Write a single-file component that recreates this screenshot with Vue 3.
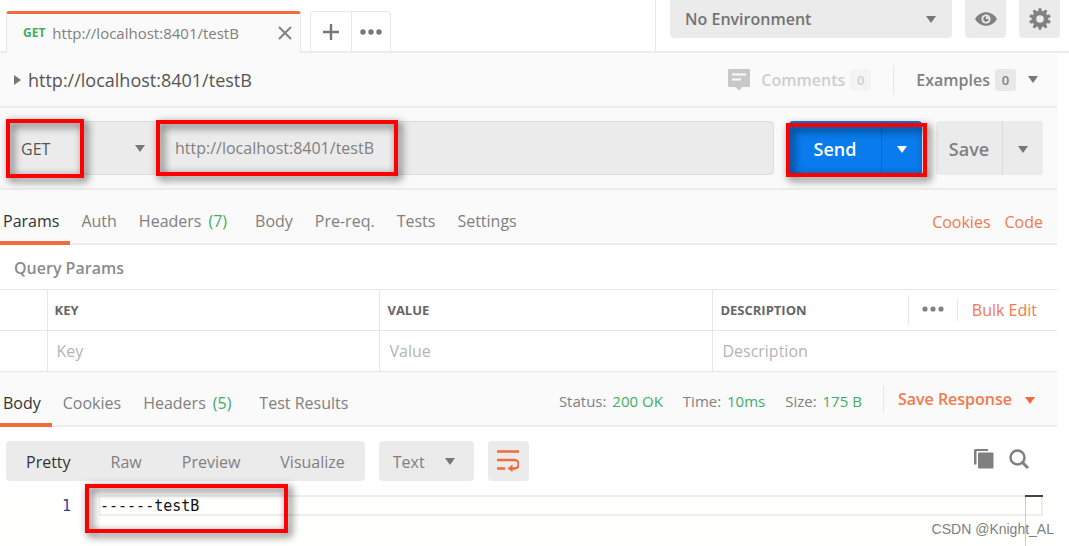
<script setup>
import { ref } from 'vue'

const url = ref('http://localhost:8401/testB')
const environment = ref('No Environment')
const method = ref('GET')
const format = ref('Text')
const requestTabs = [
  { name: 'Params', active: true },
  { name: 'Auth' },
  { name: 'Headers', count: 7 },
  { name: 'Body' },
  { name: 'Pre-req.' },
  { name: 'Tests' },
  { name: 'Settings' },
]
const responseTabs = [
  { name: 'Body', active: true },
  { name: 'Cookies' },
  { name: 'Headers', count: 5 },
  { name: 'Test Results' },
]
const stats = [
  { label: 'Status:', value: '200 OK' },
  { label: 'Time:', value: '10ms' },
  { label: 'Size:', value: '175 B' },
]
const views = ['Pretty', 'Raw', 'Preview', 'Visualize']
</script>

<template>
  <div class="app">
    <header class="topbar">
      <div class="file-tab">
        <span class="verb">GET</span>
        <span class="file-name">{{ url }}</span>
        <button class="plain close" aria-label="Close tab">
          <svg width="14" height="14" viewBox="0 0 14 14"><path d="M1 1l12 12M13 1L1 13" stroke="#808080" stroke-width="2" fill="none" /></svg>
        </button>
      </div>
      <div class="tab-tools">
        <button class="plain" aria-label="New tab">
          <svg width="16" height="16" viewBox="0 0 16 16"><path d="M8 0v16M0 8h16" stroke="#777" stroke-width="2.400" /></svg>
        </button>
        <button class="plain" aria-label="Tab options">
          <svg width="22" height="6" viewBox="0 0 22 6" fill="#777"><circle cx="3" cy="3" r="2.700" /><circle cx="11" cy="3" r="2.700" /><circle cx="19" cy="3" r="2.700" /></svg>
        </button>
      </div>
      <div class="env">
        <div class="picker env-picker">
          <select v-model="environment" aria-label="Environment"><option>No Environment</option></select>
          <span class="caret"></span>
        </div>
        <button class="square" aria-label="Environment quick look">
          <svg width="22" height="14" viewBox="0 0 22 14"><path d="M0 7C5-2 17-2 22 7C17 16 5 16 0 7Z" fill="#808080" /><circle cx="11" cy="7" r="4.600" fill="#ebebeb" /><circle cx="11" cy="7" r="2.700" fill="#808080" /><path d="M11 7V4.300A2.700 2.700 0 0 1 13.700 7Z" fill="#ebebeb" /></svg>
        </button>
        <button class="square" aria-label="Manage environments">
          <svg width="22" height="22" viewBox="-11 -11 22 22">
            <circle r="6" fill="none" stroke="#808080" stroke-width="4.500" />
            <path v-for="n in 10" :key="n" d="M-2-7L-1.300-10.800H1.300L2-7Z" fill="#808080" :transform="`rotate(${n * 36})`" />
          </svg>
        </button>
      </div>
    </header>

    <main class="content">
      <section class="title-row">
        <span class="disclosure"></span>
        <h1>{{ url }}</h1>
        <button class="plain comments" disabled>
          <svg width="22" height="22" viewBox="0 0 22 22"><path d="M1 0H21Q22 0 22 1V17Q22 18 21 18H14.500L11 21.500L7.500 18H1Q0 18 0 17V1Q0 0 1 0Z" fill="#c8c8c8" /><path d="M4 5.500H18M4 10.500H13" stroke="#fafafa" stroke-width="2.200" /></svg>
          Comments <span class="badge">0</span>
        </button>
        <button class="plain examples">Examples <span class="badge">0</span><span class="caret"></span></button>
      </section>

      <section class="url-row">
        <div class="address">
          <div class="picker method">
            <select v-model="method" aria-label="Request method"><option>GET</option></select>
            <span class="caret"></span>
            <span class="mark mark-method"></span>
          </div>
          <div class="url-field">
            <input v-model="url" type="text" aria-label="Request URL" spellcheck="false" />
            <span class="mark mark-url"></span>
          </div>
        </div>
        <div class="split send">
          <button>Send</button>
          <button aria-label="Send options"><span class="caret"></span></button>
          <span class="mark mark-send"></span>
        </div>
        <div class="split save">
          <button>Save</button>
          <button aria-label="Save options"><span class="caret"></span></button>
        </div>
      </section>

      <section class="tab-row">
        <nav class="tabs">
          <button v-for="tab in requestTabs" :key="tab.name" class="tab" :class="{ active: tab.active }">{{ tab.name }}<span v-if="tab.count" class="count">({{ tab.count }})</span></button>
        </nav>
        <div class="links"><a href="#">Cookies</a><a href="#">Code</a></div>
      </section>

      <h2>Query Params</h2>
      <table>
        <colgroup><col class="check-col" /><col class="field-col" /><col class="field-col" /><col /></colgroup>
        <thead>
          <tr>
            <th></th>
            <th>KEY</th>
            <th>VALUE</th>
            <th>
              <div class="description-head">
                <span>DESCRIPTION</span>
                <button class="plain more" aria-label="More columns">
                  <svg width="22" height="6" viewBox="0 0 22 6" fill="#808080"><circle cx="3" cy="3" r="2.600" /><circle cx="11" cy="3" r="2.600" /><circle cx="19" cy="3" r="2.600" /></svg>
                </button>
                <a href="#" class="bulk">Bulk Edit</a>
              </div>
            </th>
          </tr>
        </thead>
        <tbody>
          <tr>
            <td></td>
            <td><input type="text" placeholder="Key" aria-label="Key" /></td>
            <td><input type="text" placeholder="Value" aria-label="Value" /></td>
            <td><input type="text" placeholder="Description" aria-label="Description" /></td>
          </tr>
        </tbody>
      </table>

      <section class="tab-row response-row">
        <nav class="tabs">
          <button v-for="tab in responseTabs" :key="tab.name" class="tab" :class="{ active: tab.active }">{{ tab.name }}<span v-if="tab.count" class="count">({{ tab.count }})</span></button>
        </nav>
        <div class="stats">
          <span v-for="s in stats" :key="s.label">{{ s.label }} <b>{{ s.value }}</b></span>
        </div>
        <button class="plain save-response">Save Response <span class="caret"></span></button>
      </section>

      <section class="viewer-tools">
        <div class="views">
          <button v-for="(view, i) in views" :key="view" :class="{ active: i === 0 }">{{ view }}</button>
        </div>
        <div class="picker format">
          <select v-model="format" aria-label="Response format"><option>Text</option></select>
          <span class="caret"></span>
        </div>
        <button class="square" aria-label="Wrap lines">
          <svg width="22" height="22" viewBox="0 0 22 22" fill="none" stroke="#f26b3a" stroke-width="2.400"><path d="M0 1.500H22M0 10H17.500A4.250 4.250 0 0 1 17.500 18.500H13M0 18.500H8" /><path d="M15.500 14.500L10.500 18.500L15.500 22Z" fill="#f26b3a" stroke="none" /></svg>
        </button>
        <div class="viewer-actions">
          <button class="plain" aria-label="Copy response">
            <svg width="20" height="20" viewBox="0 0 20 20" fill="#808080"><path d="M0 1.500Q0 0 1.500 0H14V2H2.500V15.500H0Z" /><rect x="4" y="3.500" width="15.500" height="16" rx="1" /></svg>
          </button>
          <button class="plain" aria-label="Search response">
            <svg width="20" height="20" viewBox="0 0 20 20" fill="none" stroke="#808080"><circle cx="8.500" cy="8.500" r="7" stroke-width="2.500" /><path d="M13.500 13.500L19 19" stroke-width="3" /></svg>
          </button>
        </div>
      </section>

      <section class="editor">
        <span class="line-number">1</span>
        <div class="code-area">
          <code>------testB</code>
          <div class="overview"></div>
          <span class="mark mark-body"></span>
        </div>
      </section>
    </main>
    <span class="watermark">CSDN @Knight_AL</span>
  </div>
</template>

<style>
body {
  background: #fff;
}
</style>

<style scoped>
.app {
  position: relative;
  display: flex;
  flex-direction: column;
  min-height: 100vh;
  overflow: hidden;
  font-family: "Open Sans", "Noto Sans", sans-serif;
  font-size: 16px;
  line-height: 22px;
  color: #808080;
}
*, *::before, *::after {
  box-sizing: border-box;
}
button, input, select {
  font: inherit;
  color: inherit;
  margin: 0;
  padding: 0;
  border: 0;
  background: none;
  border-radius: 0;
}
button {
  display: flex;
  align-items: center;
  justify-content: center;
}
svg {
  display: block;
  flex: none;
}
a {
  color: #f2794f;
  text-decoration: none;
}
.caret {
  flex: none;
  border: 5px solid transparent;
  border-top: 7px solid #777;
  border-bottom: 0;
}
.picker {
  position: relative;
  display: flex;
  align-items: center;
  background: #ebebeb;
}
.picker select {
  appearance: none;
  width: 100%;
  height: 100%;
}
.picker .caret {
  position: absolute;
  right: 16px;
  pointer-events: none;
}
.square {
  width: 41px;
  height: 40px;
  border-radius: 4px;
  background: #ebebeb;
}
.topbar {
  display: flex;
  align-items: flex-end;
  height: 53px;
  padding-left: 6px;
  border-bottom: 2px solid #ececec;
}
.file-tab {
  display: flex;
  align-items: center;
  width: 295px;
  height: 42px;
  margin-bottom: -2px;
  padding: 0 8px 2px 16px;
  border: 1px solid #e6e6e6;
  border-top: 3px solid #f26b3a;
  border-bottom: 0;
  border-radius: 3px 3px 0 0;
  background: #fafafa;
  font-size: 15px;
}
.verb {
  margin-right: 7px;
  font-size: 12px;
  font-weight: 700;
  color: #3fae62;
}
.close {
  margin-left: auto;
}
.tab-tools {
  display: flex;
  height: 40px;
  margin-left: 9px;
  border: 1px solid #e6e6e6;
  border-bottom: 0;
  border-radius: 4px 4px 0 0;
}
.tab-tools button {
  width: 40px;
}
.tab-tools button + button {
  width: 39px;
  border-left: 1px solid #e6e6e6;
}
.env {
  display: flex;
  gap: 13px;
  height: 51px;
  margin-left: auto;
  padding: 0 9px 0 14px;
  border-left: 1px solid #e6e6e6;
}
.env .square, .env-picker {
  height: 38px;
  border-radius: 0 0 4px 4px;
}
.env-picker {
  width: 282px;
  font-weight: 600;
  color: #737373;
}
.env-picker select {
  padding-left: 15px;
}
.content {
  display: flex;
  flex: 1;
  flex-direction: column;
  margin-right: 12px;
}
.title-row {
  display: flex;
  align-items: center;
  height: 55px;
  padding: 0 19px 0 14px;
  border-bottom: 2px solid #ececec;
  background: #fafafa;
}
.disclosure {
  border: 5px solid transparent;
  border-left: 7px solid #777;
  border-right: 0;
}
h1 {
  flex: 1;
  margin: 0 0 0 7px;
  font-size: 18px;
  font-weight: 400;
  color: #555;
}
.badge {
  margin-left: 5px;
  width: 21px;
  border-radius: 3px;
  background: #e8e8e8;
  font-size: 13px;
}
.comments {
  height: 28px;
  gap: 0;
  padding-right: 22px;
  border-right: 1px solid #e6e6e6;
  font-weight: 600;
  color: #cecece;
}
.comments svg {
  margin-right: 11px;
}
.comments .badge {
  background: #f4f4f4;
}
.examples {
  padding-left: 22px;
  font-weight: 600;
}
.examples .caret {
  margin-left: 12px;
}
.url-row {
  display: flex;
  height: 82px;
  padding: 13px 14px 13px 6px;
  border-bottom: 2px solid #ececec;
  background: #fafafa;
}
.address {
  display: flex;
  flex: 1;
  height: 54px;
  border: 1px solid #dcdcdc;
  border-radius: 4px;
  background: #ebebeb;
}
.method {
  width: 149px;
  font-size: 16px;
  font-weight: 400;
  color: #555;
}
.method select {
  padding: 2px 0 0 14px;
}
.method .caret {
  right: 11px;
}
.url-field {
  position: relative;
  flex: 1;
}
.url-field input {
  width: 100%;
  height: 100%;
  padding: 0 20px 0 19px;
}
.split {
  position: relative;
  display: flex;
  height: 54px;
  border-radius: 4px;
  font-size: 18px;
  font-weight: 600;
}
.send {
  width: 133px;
  margin-left: 15px;
  background: #097bed;
  color: #fff;
}
.save {
  width: 107px;
  margin-left: 14px;
  background: #ebebeb;
}
.split button {
  padding-top: 2px;
}
.split button:first-child {
  flex: 1;
}
.split button:nth-child(2) {
  width: 41px;
  border-left: 1px solid #dadada;
}
.send button:nth-child(2) {
  border-left-color: #0869ca;
}
.send .caret {
  border-top-color: #fff;
}
.mark {
  position: absolute;
  z-index: 2;
  border: 4px solid #f00;
  filter: drop-shadow(3px 3px 4px rgba(0, 0, 0, 0.7));
  pointer-events: none;
}
.mark-method {
  inset: -3px auto -4px -1px;
  width: 78px;
}
.mark-url {
  top: -2px;
  bottom: -2px;
  left: 0;
  width: 242px;
}
.mark-send {
  inset: 2px -5px -2px -3px;
}
.mark-body {
  top: -11px;
  left: -14px;
  width: 203px;
  height: 49px;
}
.tab-row {
  display: flex;
  align-items: stretch;
  height: 55px;
  border-bottom: 2px solid #ececec;
  background: #fafafa;
}
.tabs {
  display: flex;
  margin-bottom: -2px;
}
.tab {
  padding: 10px 11px 0;
  border-bottom: 4px solid transparent;
}
.tab.active {
  padding: 10px 11px 0 3px;
  border-bottom-color: #f26b3a;
  color: #333;
}
.count {
  margin: 0 6px 0 7px;
  color: #3fae62;
}
.links {
  display: flex;
  align-items: center;
  gap: 14px;
  margin-left: auto;
  padding: 10px 14px 0 0;
}
h2 {
  margin: 0;
  padding: 12px 14px 10px;
  font-size: 16px;
  font-weight: 600;
  color: #8c8c8c;
}
table {
  width: 100%;
  border-collapse: collapse;
  table-layout: fixed;
}
.check-col {
  width: 47px;
}
.field-col {
  width: 31.5%;
}
th, td {
  height: 41px;
  padding: 0 0 0 7px;
  border: 1px solid #e6e6e6;
  text-align: left;
}
th:first-child, td:first-child {
  border-left: 0;
}
th:last-child, td:last-child {
  border-right: 0;
}
th {
  font-size: 13px;
  font-weight: 700;
  color: #666;
}
td input {
  display: block;
  width: 100%;
  padding-left: 2px;
}
td input::placeholder {
  color: #b4b4b4;
  opacity: 1;
}
.description-head {
  display: flex;
  align-items: center;
}
.more {
  height: 30px;
  margin-left: auto;
  padding: 0 13px 3px;
  border-left: 1px solid #e6e6e6;
}
.bulk {
  padding: 0 20px 0 14px;
  border-left: 1px solid #e6e6e6;
  font-size: 16px;
  font-weight: 400;
}
.stats {
  display: flex;
  align-items: center;
  gap: 20px;
  margin: 4px 21px 0 auto;
  font-size: 15px;
}
.stats b {
  margin-left: 2px;
  font-weight: 400;
  color: #3fae62;
}
.save-response {
  align-self: center;
  height: 28px;
  padding: 0 22px 0 14px;
  border-left: 1px solid #e6e6e6;
  font-weight: 600;
  color: #f2794f;
}
.save-response .caret {
  margin: 4px 0 0 13px;
  border-top-color: #f26b3a;
}
.viewer-tools {
  display: flex;
  gap: 14px;
  padding: 14px 28px 14px 6px;
}
.views {
  display: flex;
  height: 40px;
  border-radius: 4px;
  background: #ebebeb;
}
.views button {
  padding: 2px 20px 0;
}
.views .active {
  color: #333;
}
.format {
  width: 95px;
  height: 40px;
  border-radius: 4px;
}
.format select {
  padding: 2px 0 0 14px;
}
.format .caret {
  right: 19px;
}
.viewer-actions {
  display: flex;
  align-items: center;
  gap: 15px;
  height: 36px;
  margin-left: auto;
}
.editor {
  display: flex;
  flex: 1;
  padding-right: 14px;
  background: #fffffe;
  font-family: "DejaVu Sans Mono", monospace;
  font-size: 15px;
}
.line-number {
  width: 99px;
  padding-right: 28px;
  text-align: right;
  color: #2c3f94;
}
.code-area {
  position: relative;
  flex: 1;
}
.code-area code {
  display: block;
  height: 21px;
  border: 2px solid #eee;
  border-left-width: 1px;
  font: inherit;
  line-height: 18px;
  color: #111;
}
.overview {
  position: absolute;
  inset: 0 0 0 auto;
  width: 18px;
  border-top: 2px solid #444;
}
.overview::before {
  content: "";
  position: absolute;
  inset: 0 auto 0 0;
  border-left: 1px solid #ccc;
}
.watermark {
  position: absolute;
  right: 15px;
  bottom: 6px;
  font-family: "Liberation Sans", sans-serif;
  font-size: 14px;
}
</style>
